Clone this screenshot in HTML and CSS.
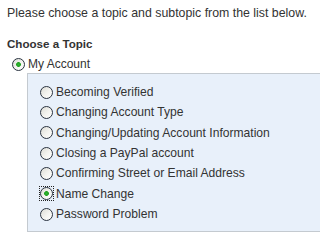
FILE: index.html
```html
<!DOCTYPE html>
<html>
<head>
<meta charset="utf-8">
<link rel="stylesheet" href="styles.css">
</head>
<body>
<div class="page">
  <p class="intro">Please choose a topic and subtopic from the list below.</p>
  <h2 class="title">Choose a Topic</h2>
  <label class="topic"><input type="radio" name="topic" class="radio" checked><span>My Account</span></label>
  <div class="box">
    <label class="opt"><input type="radio" name="sub" class="radio"><span>Becoming Verified</span></label>
    <label class="opt"><input type="radio" name="sub" class="radio"><span>Changing Account Type</span></label>
    <label class="opt"><input type="radio" name="sub" class="radio"><span>Changing/Updating Account Information</span></label>
    <label class="opt"><input type="radio" name="sub" class="radio"><span>Closing a PayPal account</span></label>
    <label class="opt"><input type="radio" name="sub" class="radio"><span>Confirming Street or Email Address</span></label>
    <label class="opt"><span class="focus"><input type="radio" name="sub" class="radio" checked></span><span>Name Change</span></label>
    <label class="opt"><input type="radio" name="sub" class="radio"><span>Password Problem</span></label>
  </div>
</div>
</body>
</html>
```
FILE: styles.css
```css
html, body {
  margin: 0;
  padding: 0;
  background: #ffffff;
}
body {
  font-family: "Liberation Sans", Arial, sans-serif;
  font-size: 12px;
  color: #333333;
}
.page {
  padding: 6px 0 0 7px;
}
.intro {
  margin: 0;
  font-size: 12.35px;
  line-height: 14px;
}
.title {
  margin: 16px 0 0 0;
  font-size: 11.6px;
  font-weight: bold;
  line-height: 16px;
  color: #333333;
}
.topic {
  display: flex;
  align-items: center;
  height: 14px;
  margin: 5px 0 0 5px;
  gap: 3px;
}
.radio {
  appearance: none;
  -webkit-appearance: none;
  margin: 0;
  width: 13px;
  height: 13px;
  border: 1px solid #2a3340;
  border-radius: 50%;
  box-sizing: border-box;
  background: linear-gradient(135deg, #dcdcd6 0%, #f4f4f0 55%, #ffffff 100%);
  flex: none;
}
.radio:checked {
  background:
    radial-gradient(circle at 50% 50%, #2fb52f 0, #21a121 2px, rgba(33,161,33,0) 2.8px),
    linear-gradient(135deg, #dcdcd6 0%, #f4f4f0 55%, #ffffff 100%);
}
.box {
  margin: 2px 0 0 20px;
  padding: 8px 0 0 12px;
  height: 149px;
  border: 1px solid #c4cad0;
  border-right: none;
  background: #e8f0fa;
}
.opt {
  display: flex;
  align-items: center;
  height: 20.33px;
  gap: 3px;
  font-size: 12.1px;
}
.focus {
  display: flex;
  outline: 1px dotted #222;
  outline-offset: 0;
}
```
